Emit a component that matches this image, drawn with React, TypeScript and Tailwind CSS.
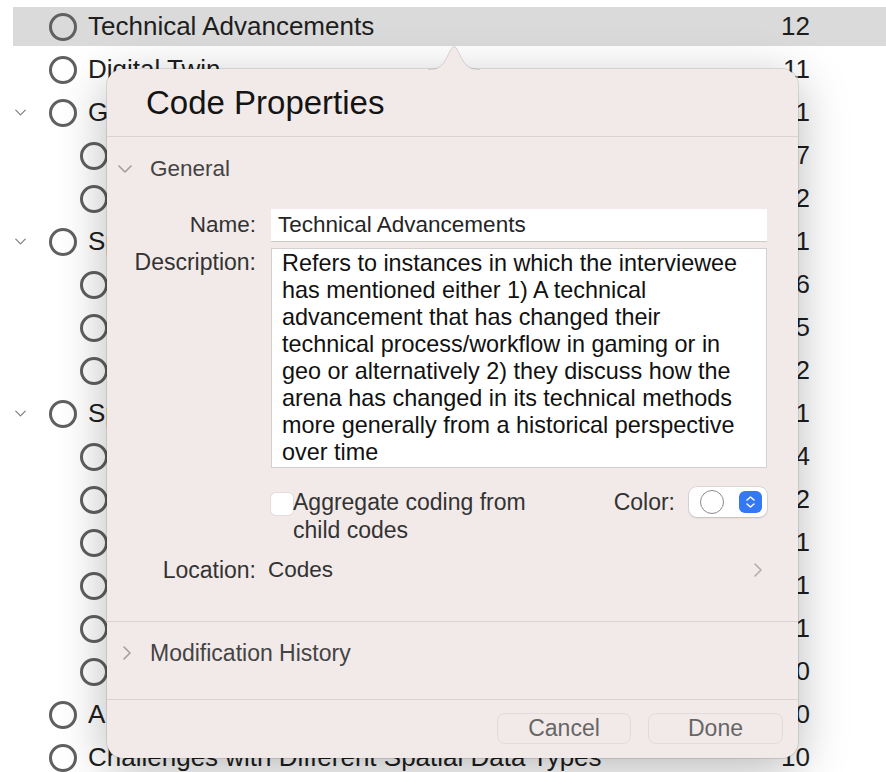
import React from "react";

type CodeNode = {
  label: string;
  count: number;
  level: 0 | 1;
  expandable?: boolean;
  selected?: boolean;
};

const codes: CodeNode[] = [
  { label: "Technical Advancements", count: 12, level: 0, selected: true },
  { label: "Digital Twin", count: 11, level: 0 },
  { label: "Game Engines", count: 1, level: 0, expandable: true },
  { label: "Unity", count: 7, level: 1 },
  { label: "Unreal Engine", count: 2, level: 1 },
  { label: "Spatial Thinking", count: 1, level: 0, expandable: true },
  { label: "Navigation", count: 6, level: 1 },
  { label: "Scale", count: 5, level: 1 },
  { label: "Orientation", count: 2, level: 1 },
  { label: "Spatial Data", count: 1, level: 0, expandable: true },
  { label: "Terrain", count: 4, level: 1 },
  { label: "Point Clouds", count: 2, level: 1 },
  { label: "Imagery", count: 1, level: 1 },
  { label: "Vector Data", count: 1, level: 1 },
  { label: "Elevation Models", count: 1, level: 1 },
  { label: "Metadata", count: 0, level: 1 },
  { label: "AI and Automation", count: 0, level: 0 },
  { label: "Challenges with Different Spatial Data Types", count: 10, level: 0 },
];

const description = [
  "Refers to instances in which the interviewee",
  "has mentioned either 1) A technical",
  "advancement that has changed their",
  "technical process/workflow in gaming or in",
  "geo or alternatively 2) they discuss how the",
  "arena has changed in its technical methods",
  "more generally from a historical perspective",
  "over time",
];

const ChevronDown = ({ className = "" }: { className?: string }) => (
  <svg width="14" height="8" viewBox="0 0 14 8" className={className}>
    <path d="M1 1l6 6 6-6" fill="none" stroke="currentColor" strokeWidth="1.6" strokeLinecap="round" strokeLinejoin="round" />
  </svg>
);

const ChevronRight = ({ className = "" }: { className?: string }) => (
  <svg width="8" height="14" viewBox="0 0 8 14" className={className}>
    <path d="M1 1l6 6-6 6" fill="none" stroke="currentColor" strokeWidth="1.6" strokeLinecap="round" strokeLinejoin="round" />
  </svg>
);

const CodeRow = ({ code }: { code: CodeNode }) => (
  <div className="h-[43px] py-[2px] pl-[13px]">
    <div
      className={`h-[39px] flex items-center pr-[76px] ${code.selected ? "bg-[#dadada]" : ""}`}
    >
      <div className="w-[36px] shrink-0 pl-[2px] text-[#808080]">
        {code.expandable && <ChevronDown className="w-[11px] h-[7px]" />}
      </div>
      {code.level === 1 && <div className="w-[31px] shrink-0" />}
      <div className="w-[28px] h-[28px] shrink-0 rounded-full border-[3px] border-[#606060]" />
      <span className="ml-[11px] flex-1 whitespace-nowrap text-[26px] text-[#1e1e1e]">{code.label}</span>
      <span className="text-[26px] text-[#1e1e1e]">{code.count}</span>
    </div>
  </div>
);

const ColorWell = () => (
  <div className="w-[78px] h-[30px] rounded-[8px] bg-white shadow-[0_0_0_1px_rgba(0,0,0,0.08),0_1px_2px_rgba(0,0,0,0.12)] flex items-center justify-between pl-[11px] pr-[5px]">
    <div className="w-[24px] h-[24px] rounded-full border-[1.5px] border-[#8a8a8a]" />
    <div className="w-[23px] h-[22px] rounded-[6px] bg-[#3478f6] flex flex-col items-center justify-center gap-[2px]">
      <svg width="9" height="5" viewBox="0 0 9 5">
        <path d="M1 4l3.5-3 3.5 3" fill="none" stroke="white" strokeWidth="1.5" strokeLinecap="round" strokeLinejoin="round" />
      </svg>
      <svg width="9" height="5" viewBox="0 0 9 5">
        <path d="M1 1l3.5 3 3.5-3" fill="none" stroke="white" strokeWidth="1.5" strokeLinecap="round" strokeLinejoin="round" />
      </svg>
    </div>
  </div>
);

const CodePropertiesPopover = () => (
  <div className="absolute left-[107px] top-[69px] w-[691px] h-[689px] rounded-[16px] bg-[#f2eae9] shadow-[0_12px_50px_rgba(0,0,0,0.28),0_0_0_1px_rgba(0,0,0,0.1)] flex flex-col">
    {/* pointer towards the selected code */}
    <svg width="52" height="28" viewBox="0 0 52 28" className="absolute left-[321px] -top-[27px]">
      <path d="M0 28 C9 28 13 25 17 19 L23 7 Q26 2 29 7 L35 19 C39 25 43 28 52 28 Z" fill="#f2eae9" />
      <path d="M0 27.5 C9 27.5 13 25 17 19 L23 7 Q26 2 29 7 L35 19 C39 25 43 27.5 52 27.5" fill="none" stroke="rgba(0,0,0,0.13)" strokeWidth="1" />
    </svg>

    <div className="h-[68px] shrink-0 flex items-center pl-[39px] border-b border-[#dbd2d1]">
      <h1 className="text-[33px] text-[#141414]">Code Properties</h1>
    </div>

    {/* General */}
    <div className="h-[485px] shrink-0 border-b border-[#dbd2d1]">
      <div className="mt-[12px] h-[40px] flex items-center pl-[11px] text-[#a49d9c]">
        <ChevronDown />
        <span className="ml-[18px] text-[22.5px] text-[#444]">General</span>
      </div>

      <div className="mt-[20px] flex items-center h-[32px]">
        <div className="w-[149px] text-right text-[22.5px] leading-[28px] text-[#333]">Name:</div>
        <div className="ml-[15px] w-[496px] h-[32px] bg-white shadow-[0_1px_0_rgba(0,0,0,0.14)] flex items-center pl-[7px] text-[22.5px] text-[#252525]">
          Technical Advancements
        </div>
      </div>

      <div className="mt-[7px] flex">
        <div className="w-[149px] text-right text-[23px] leading-[28px] text-[#333]">Description:</div>
        <div className="ml-[15px] w-[496px] h-[220px] bg-white border border-[#d4d0cf] pl-[10px] pt-[1px] text-[23.4px] leading-[27px] text-[#111]">
          {description.map((line) => (
            <div key={line} className="whitespace-nowrap">{line}</div>
          ))}
        </div>
      </div>

      <div className="mt-[20px] flex items-start">
        <div className="w-[164px] shrink-0" />
        <div className="mt-[5px] w-[22px] h-[22px] shrink-0 rounded-[5px] bg-white shadow-[0_0_0_1px_rgba(0,0,0,0.06)]" />
        <div className="text-[23px] leading-[28px] text-[#333]">
          Aggregate coding from
          <br />
          child codes
        </div>
        <div className="ml-auto mr-[31px] h-[28px] flex items-center gap-[14px]">
          <span className="text-[23px] text-[#333]">Color:</span>
          <ColorWell />
        </div>
      </div>

      <div className="mt-[6px] h-[40px] flex items-center">
        <div className="w-[149px] text-right text-[23px] text-[#333]">Location:</div>
        <div className="ml-[12px] w-[499px] flex items-center justify-between pr-[5px]">
          <span className="text-[22.5px] text-[#333]">Codes</span>
          <ChevronRight className="text-[#b3adac]" />
        </div>
      </div>
    </div>

    {/* Modification History */}
    <div className="h-[78px] shrink-0 border-b border-[#dbd2d1]">
      <div className="mt-[11px] h-[40px] flex items-center pl-[16px] text-[#a49d9c]">
        <ChevronRight />
        <span className="ml-[19px] text-[23px] text-[#444]">Modification History</span>
      </div>
    </div>

    <div className="flex-1 flex justify-end items-start pt-[13px] pr-[15px] gap-[17px]">
      <button className="w-[134px] h-[31px] rounded-[8px] border border-[#e3dbda] text-[23px] leading-[29px] text-[#666]">
        Cancel
      </button>
      <button className="w-[135px] h-[31px] rounded-[8px] border border-[#e3dbda] text-[23px] leading-[29px] text-[#666]">
        Done
      </button>
    </div>
  </div>
);

export default function App() {
  return (
    <div className="relative w-[886px] h-[772px] overflow-hidden bg-white font-['Liberation_Sans',Arial,sans-serif]">
      <div className="pt-[5px]">
        {codes.map((code) => (
          <CodeRow key={code.label} code={code} />
        ))}
      </div>
      <CodePropertiesPopover />
    </div>
  );
}
